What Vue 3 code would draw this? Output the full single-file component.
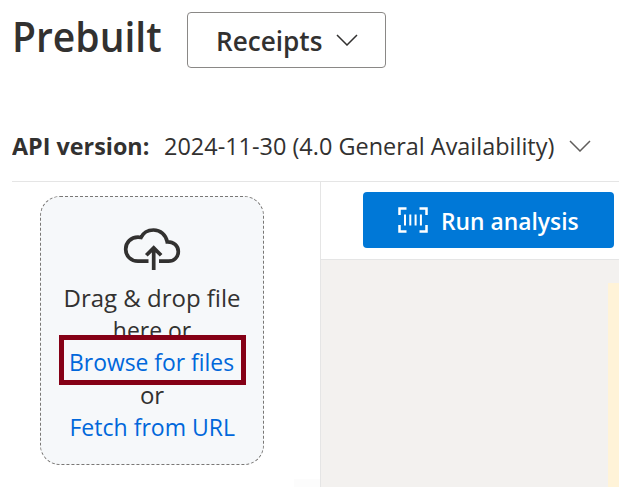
<script setup>
const apiVersion = '2024-11-30 (4.0 General Availability)'
</script>

<template>
  <div class="page">
    <header class="title-row">
      <h1 class="title"><span class="fit">Prebuilt</span></h1>
      <button class="model">
        <span class="fit">Receipts</span>
        <svg class="chevron" width="22" height="12" viewBox="0 0 22 12"><path d="M1 1l10 10L21 1" /></svg>
      </button>
    </header>

    <div class="version-row">
      <span class="label"><span class="fit">API version:</span></span>
      <span class="version"><span class="fit">{{ apiVersion }}</span></span>
      <svg class="chevron light" width="22" height="12" viewBox="0 0 22 12"><path d="M1 1l10 10L21 1" /></svg>
    </div>

    <main class="workspace">
      <aside class="files">
        <div class="drop">
          <svg class="cloud" width="58" height="44" viewBox="0 0 58 44">
            <path d="M25.5 34.2H15C8 34.2 2.7 28.9 2.7 22.2S8 10.2 15 10.2c1.500 0 2 .1 3 .3C20.200 5.800 25 3 30.500 3 37.500 3 43 7.800 44.200 14.800 50.500 14.600 55.300 18.800 55.300 24.500S51 34.200 45.500 34.200H36" />
            <path d="M30.700 43V21.500M23.300 28.300l7.400-7.400 7.400 7.400" />
          </svg>
          <div class="line drag"><span class="fit">Drag &amp; drop file</span></div>
          <div class="line here"><span class="fit">here or</span></div>
          <div class="line link browse"><span class="fit">Browse for files</span><i class="highlight"></i></div>
          <div class="line or"><span class="fit">or</span></div>
          <div class="line link fetch"><span class="fit">Fetch from URL</span></div>
        </div>
        <div class="corner"></div>
      </aside>
      <section class="viewer">
        <div class="toolbar">
          <button class="run">
            <svg width="30" height="26" viewBox="0 0 30 26">
              <path d="M1.500 8V1.500H8.500M21.500 1.500H28.500V8M28.500 18V24.500H21.500M8.500 24.500H1.500V18" stroke-width="2.500" />
              <path d="M7 7.500v11M12.300 7.500v11M17.600 7.500v11M22.900 7.500v11" stroke-width="2" />
            </svg>
            <span class="fit">Run analysis</span>
          </button>
        </div>
        <div class="canvas"><div class="document"></div></div>
      </section>
    </main>
  </div>
</template>

<style>
body { margin: 0; background: #fff; overflow: hidden; }
</style>

<style scoped>
.page {
  width: 619px;
  height: 487px;
  overflow: hidden;
  display: flex;
  flex-direction: column;
  font-family: "Open Sans", "Noto Sans", sans-serif;
  color: #323130;
}
.fit { display: inline-block; white-space: nowrap; transform-origin: left center; }
.title-row { display: flex; height: 119px; flex: none; padding: 12px 0 0 12px; box-sizing: border-box; }
.title { margin: 0; width: 175px; font-size: 41px; line-height: 48px; font-weight: 600; }
.title .fit { transform: scaleX(0.952); }
.model {
  display: flex; align-items: center; box-sizing: border-box;
  width: 199px; height: 56px; padding: 0 27px 0 28px; justify-content: space-between;
  border: 1px solid #8a8886; border-radius: 4px; background: #fff;
  font: 600 27px/54px "Open Sans", sans-serif; color: #323130;
}
.model .fit { transform: translateY(1px) scaleX(0.968); }
.chevron { fill: none; stroke: #323130; stroke-width: 1.5; flex: none; }
.light { stroke: #605e5c; }
.version-row {
  display: flex; align-items: center; flex: none; height: 63px; box-sizing: border-box;
  margin-left: 12px; padding-bottom: 8px; border-bottom: 1px solid #e5e5e5;
  font-size: 24px; line-height: 32px; white-space: nowrap;
}
.label { font-weight: 700; width: 152px; flex: none; }
.label .fit { transform: scaleX(0.972); }
.version { width: 405px; flex: none; }
.version .fit { transform: scaleX(0.977); }
.workspace { display: flex; flex: 1; min-height: 0; }
.files { width: 320px; flex: none; display: flex; flex-direction: column; justify-content: space-between; }
.drop {
  box-sizing: border-box; width: 224px; height: 269px; margin: 14px 0 0 40px; padding-top: 30px;
  border: 1px dashed #797775; border-radius: 20px; background: #f6f8fa;
  display: flex; flex-direction: column; align-items: center;
  font-size: 24px; line-height: 32.3px;
}
.cloud { fill: none; stroke: #323130; stroke-width: 3.7; margin-bottom: 11px; flex: none; }
.line .fit { transform-origin: center; }
.here .fit { transform: scaleX(0.955); }
.browse .fit { transform: translateY(-1px) scaleX(0.953); }
.fetch .fit { transform: scaleX(0.96); }
.line { height: 32.3px; flex: none; }
.link { color: #0067db; }
.browse { position: relative; }
.highlight { position: absolute; left: 50%; top: -12px; width: 187px; height: 50px; margin-left: -93px; box-sizing: border-box; border: 5px solid #850016; }
.corner { width: 26px; height: 8px; background: #fcfcfc; align-self: flex-end; }
.viewer { flex: 1; display: flex; flex-direction: column; border-left: 1px solid #e5e5e5; }
.toolbar { height: 67px; padding: 10px 0 0 42px; border-bottom: 1px solid #e5e5e5; }
.run {
  display: flex; align-items: center; gap: 13px; box-sizing: border-box; width: 251px; height: 56px;
  padding: 0 0 0 35px; border: 0; border-radius: 4px; background: #0078d7; color: #fff;
  font: 600 24px/56px "Open Sans", sans-serif;
}
.run svg { fill: none; stroke: #fff; flex: none; }
.run .fit { transform: translateY(1px) scaleX(0.951); }
.canvas { flex: 1; background: #f3f1ef; display: flex; justify-content: flex-end; padding-top: 23px; }
.document { width: 11px; background: #fff3d8; }
</style>
